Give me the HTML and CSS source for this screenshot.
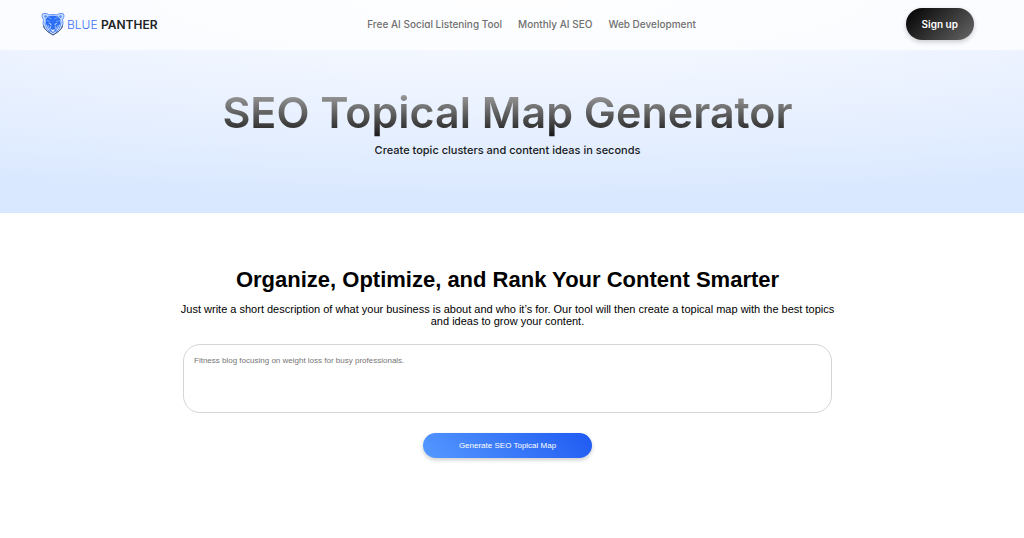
FILE: index.html
```html
<!DOCTYPE html>
<html lang="en">
<head>
    <meta charset="UTF-8">
    <meta name="viewport" content="width=device-width, initial-scale=1.0">
    <title>SEO Topical Map Generator | Blue Panther</title>
    <link rel="stylesheet" href="styles.css">
</head>
<body>
    <div class="top">
        <header class="navbar">
            <a class="logo" href="#">
                <svg class="logo-icon" viewBox="0 0 48 48" aria-hidden="true">
                    <!-- head -->
                    <path d="M2 7 Q2 2 8 3 Q13 3 16 6 Q24 4 32 6 Q35 3 40 3 Q46 2 46 7 Q46 12 43 15 L44 23 L42 31 L36 38 L24 46 L12 38 L6 31 L4 23 L5 15 Q2 12 2 7 Z" fill="#cfe0ff" stroke="#5b90f7" stroke-width="2"/>
                    <path d="M5 27 L7 33 L13 39 L24 46 L35 39 L41 33 L43 27" fill="none" stroke="#4a5878" stroke-width="2"/>
                    <!-- ears -->
                    <path d="M6 8 Q8 5 13 8 L8 13 Z M42 8 Q40 5 35 8 L40 13 Z" fill="#5b90f7"/>
                    <!-- face -->
                    <path d="M14 9 Q24 6 34 9 L39 15 L38 24 L34 31 L30 38 L24 42 L18 38 L14 31 L10 24 L9 15 Z" fill="#2a6ff5"/>
                    <path d="M8 20 L9 27 L13 35 L18 40 M40 20 L39 27 L35 35 L30 40" fill="none" stroke="#5b90f7" stroke-width="2"/>
                    <!-- brows, eyes and muzzle -->
                    <path d="M15 11 L21 14 M33 11 L27 14 M11 17 L18 19 M37 17 L30 19" stroke="#8db7ff" stroke-width="1.500"/>
                    <path d="M14 21 L21 24 L20 26 Z M34 21 L27 24 L28 26 Z" fill="#e6efff"/>
                    <path d="M14 26 L18 35 L20 27 M34 26 L30 35 L28 27" fill="none" stroke="#b5d0ff" stroke-width="1.500"/>
                    <path d="M20 34 L24 36 L28 34 L27 38 L24 40 L21 38 Z" fill="#e6efff"/>
                </svg>
                <span class="logo-text">BLUE <strong>PANTHER</strong></span>
            </a>
            <nav class="nav-links">
                <a href="#">Free AI Social Listening Tool</a>
                <a href="#">Monthly AI SEO</a>
                <a href="#">Web Development</a>
            </nav>
            <button class="signup" type="button">Sign up</button>
        </header>
        <section class="hero">
            <h1>SEO Topical Map Generator</h1>
            <p>Create topic clusters and content ideas in seconds</p>
        </section>
    </div>

    <main class="generator">
        <h2>Organize, Optimize, and Rank Your Content Smarter</h2>
        <p><label for="description">Just write a short description of what your business is about and who it’s for. Our tool will then create a topical map with the best topics and ideas to grow your content.</label></p>
        <form class="generator-form">
            <textarea id="description" placeholder="Fitness blog focusing on weight loss for busy professionals."></textarea>
            <button class="generate" type="button">Generate SEO Topical Map</button>
        </form>
    </main>
</body>
</html>
```

FILE: styles.css
```css
* {
    box-sizing: border-box;
}
body {
    margin: 0;
    background-color: #fff;
    color: #000;
    font-family: "Liberation Sans", Arial, sans-serif;
}
.top {
    background: radial-gradient(ellipse 130% 100% at 50% 0%, #fbfcff 0%, #ebf2ff 50%, #d9e8ff 95%);
    font-family: Inter, sans-serif;
}
.navbar {
    display: flex;
    align-items: center;
    justify-content: space-between;
    padding: 8px 50px 10px 41px;
    background-color: rgba(255, 255, 255, 0.7);
}
.logo {
    display: flex;
    align-items: center;
    gap: 2px;
    color: #3d73f5;
    text-decoration: none;
}
.logo-icon {
    width: 24px;
    height: 24px;
}
.logo-text {
    font-size: 12px;
    font-weight: 300;
    white-space: nowrap;
}
.logo-text strong {
    color: #222;
    font-weight: 600;
}
.nav-links {
    display: flex;
    gap: 16px;
}
.nav-links a {
    color: #707070;
    font-size: 10px;
    font-weight: 500;
    text-decoration: none;
    white-space: nowrap;
    font-feature-settings: "cv11";
}
.signup {
    height: 32px;
    padding: 0 16px;
    border: none;
    border-radius: 16px;
    background: linear-gradient(135deg, #000, #666);
    box-shadow: 0 2px 5px rgba(0, 0, 0, 0.2);
    color: #fff;
    font-family: inherit;
    font-size: 10px;
    font-weight: 600;
    cursor: pointer;
}
.hero {
    padding: 36px 9px 55px 0;
    text-align: center;
}
.hero h1 {
    margin: 0;
    background: linear-gradient(to bottom, #b4b4b4, #141414);
    background-clip: text;
    -webkit-background-clip: text;
    color: transparent;
    font-size: 43px;
    font-weight: 600;
    line-height: 52px;
}
.hero p {
    margin: 4px 0 0;
    color: #171a20;
    font-size: 11px;
    font-weight: 500;
    line-height: 16px;
}
.generator {
    max-width: 679px;
    margin: 0 auto;
    padding: 54px 9px 60px 0;
    text-align: center;
}
.generator h2 {
    margin: 0;
    font-size: 22px;
    line-height: 26px;
}
.generator p {
    margin: 10px 0 17px;
    font-size: 11px;
    line-height: 12px;
}
.generator-form {
    display: flex;
    flex-direction: column;
    align-items: center;
    gap: 20px;
    max-width: 649px;
    margin: 0 auto;
}
textarea {
    display: block;
    width: 100%;
    height: 69px;
    padding: 11px 10px;
    border: 1px solid #d5d5d5;
    border-radius: 17px;
    font-family: inherit;
    font-size: 8px;
    resize: none;
}
textarea::placeholder {
    color: #757575;
}
.generate {
    width: 169px;
    height: 25px;
    border: none;
    border-radius: 13px;
    background: linear-gradient(45deg, #5599ff, #1f5af2);
    box-shadow: 0 2px 4px rgba(0, 0, 0, 0.2);
    color: #fff;
    font-family: inherit;
    font-size: 8px;
    cursor: pointer;
}
```
